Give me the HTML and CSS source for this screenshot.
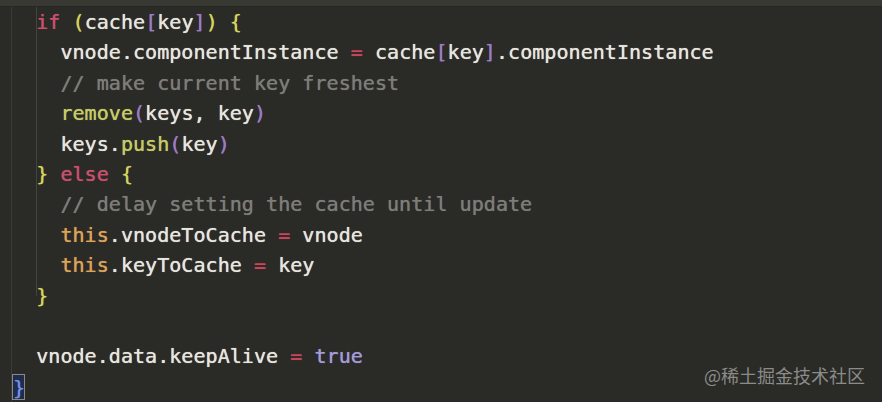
FILE: index.html
```html
<!DOCTYPE html>
<html lang="en">
<head>
<meta charset="utf-8">
<title>keep-alive</title>
<link rel="stylesheet" href="styles.css">
</head>
<body>
<div class="editor">
  <div class="topbar"></div>
  <div class="code">
    <div class="block">
      <div class="ln">  <span class="kw">if</span> <span class="pn">(</span>cache<span class="br">[</span>key<span class="br">]</span><span class="pn">)</span> <span class="pn">{</span></div>
      <div class="ln">    vnode.componentInstance <span class="op">=</span> cache<span class="br">[</span>key<span class="br">]</span>.componentInstance</div>
      <div class="ln">    <span class="cm">// make current key freshest</span></div>
      <div class="ln">    <span class="fn">remove</span><span class="br">(</span>keys, key<span class="br">)</span></div>
      <div class="ln">    keys.<span class="fn">push</span><span class="br">(</span>key<span class="br">)</span></div>
      <div class="ln">  <span class="pn">}</span> <span class="kw">else</span> <span class="pn">{</span></div>
      <div class="ln">    <span class="cm">// delay setting the cache until update</span></div>
      <div class="ln">    <span class="th">this</span>.vnodeToCache <span class="op">=</span> vnode</div>
      <div class="ln">    <span class="th">this</span>.keyToCache <span class="op">=</span> key</div>
      <div class="ln">  <span class="pn">}</span></div>
    </div>
    <div class="ln"> </div>
    <div class="ln">  vnode.data.keepAlive <span class="op">=</span> <span class="bool">true</span></div>
    <div class="ln"><span class="match">}</span></div>
  </div>
  <div class="watermark">@稀土掘金技术社区</div>
</div>
</body>
</html>
```
FILE: styles.css
```css
html, body {
  margin: 0;
  padding: 0;
  background: #2a2a27;
}
.editor {
  position: relative;
  width: 882px;
  height: 402px;
  overflow: hidden;
  background: #2a2a27 linear-gradient(#3b3b37, #3b3b37) no-repeat 11px 0 / 1px 100%;
}
.topbar {
  height: 7px;
  background: #393934;
  border-bottom: 1px solid #262623;
  box-sizing: border-box;
}
.code {
  padding-left: 12px;
  font-family: "DejaVu Sans Mono", "Liberation Mono", monospace;
  font-size: 20.1px;
  line-height: 30.4px;
  color: #e6e6df;
  text-shadow: 0 0 0.7px currentColor;
}
.block {
  background: linear-gradient(#45453f, #45453f) no-repeat 24px 0 / 1px 95%;
}
.ln {
  white-space: pre;
  height: 30.4px;
}
.kw { color: #c9506d; }
.pn { color: #d2d45c; }
.br { color: #9c7cc4; }
.op { color: #c8465c; }
.cm { color: #7d7d78; }
.fn { color: #c3cc66; }
.th { color: #dca257; }
.bool { color: #a39ad8; }
.match {
  display: inline-block;
  height: 26px;
  line-height: 26px;
  margin-top: 2px;
  border: 1px solid #8a8a82;
  background: #1f2c4e;
  color: #7190e4;
  box-sizing: border-box;
  width: 13px;
}
.watermark {
  position: absolute;
  right: 17px;
  bottom: 16px;
  font-family: "Noto Sans CJK SC", "Noto Sans", sans-serif;
  font-size: 18px;
  line-height: 22px;
  color: #8b8b88;
}
```
